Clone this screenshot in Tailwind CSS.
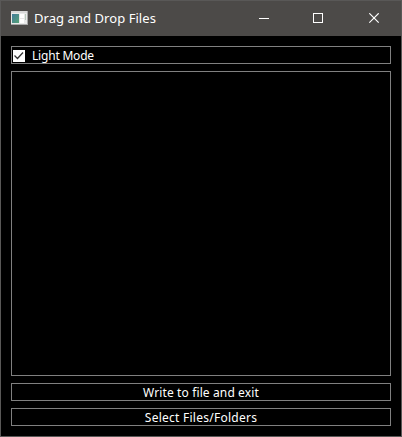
<!DOCTYPE html>
<html lang="en">
<head>
<meta charset="utf-8">
<title>Drag and Drop Files</title>
<script src="https://cdn.jsdelivr.net/npm/@tailwindcss/browser@4"></script>
</head>
<body class="bg-black">
<main class="flex h-[437px] w-[402px] flex-col border border-[#595857] bg-black text-white">
  <header class="flex h-[35px] shrink-0 items-center bg-[#4c4a48]">
    <svg class="ml-[10px] h-[14px] w-[17px] shrink-0 -translate-y-px" viewBox="0 0 17 14" shape-rendering="crispEdges">
      <defs><linearGradient id="screen" x1="0" y1="0" x2="1" y2="1"><stop offset="0" stop-color="#427b9b"/><stop offset="1" stop-color="#56a277"/></linearGradient></defs>
      <path fill="#e9e9e9" d="M0 0h16v14H0z"/>
      <path fill="#a8a8a8" d="M0 13h16v1H0zM16 0h1v14h-1z"/>
      <path fill="#d8d8d8" d="M0 0h16v2H0z"/>
      <path fill="url(#screen)" d="M1 3h7v9H1z"/>
      <path fill="#fff" d="M9 3h4v4H9zM9 8h4v4H9z"/>
      <path fill="#b9cbbd" d="M14 3h1v6h-1z"/>
    </svg>
    <h1 class="ml-[6px] -translate-y-px whitespace-nowrap font-['Noto_Sans','Open_Sans',sans-serif] text-[13px] leading-4 tracking-[0.06px]">Drag and Drop Files</h1>
    <div class="ml-auto flex h-full shrink-0">
      <button class="flex w-[55px] items-center justify-center" aria-label="Minimize"><svg class="h-[11px] w-[11px] translate-x-px" viewBox="0 0 11 11" shape-rendering="crispEdges"><path fill="#fff" d="M0 5h10v1H0z"/></svg></button>
      <button class="flex w-[55px] items-center justify-center" aria-label="Maximize"><svg class="h-[11px] w-[11px]" viewBox="0 0 11 11" shape-rendering="crispEdges"><path fill="none" stroke="#fff" d="M.5 1.5h9v9h-9z" transform="translate(0 -1)"/></svg></button>
      <button class="flex w-[55px] items-center justify-center" aria-label="Close"><svg class="h-[11px] w-[11px] translate-x-px" viewBox="0 0 11 11"><path fill="none" stroke="#fff" stroke-width="1.2" d="M.3 .3l9.4 9.4M9.7 .3L.3 9.7"/></svg></button>
    </div>
  </header>
  <section class="flex min-h-0 flex-1 flex-col gap-[7px] p-[10px] font-['Noto_Sans','DejaVu_Sans',sans-serif] text-[12px] leading-4">
    <label class="flex h-[18px] shrink-0 items-center border border-[#808080]">
      <svg class="h-[13px] w-[13px] shrink-0" viewBox="0 0 13 13"><path fill="#fff" d="M1 1h12v12H1z"/><path fill="none" stroke="#333" stroke-width="1.3" d="M2.5 6.5l3 3 5.5-6"/></svg>
      <span class="ml-[7px] translate-y-px whitespace-nowrap tracking-[-0.2px]">Light Mode</span>
    </label>
    <div class="min-h-0 flex-1 border border-[#808080]"></div>
    <button class="flex h-[18px] shrink-0 items-center justify-center border border-[#808080] whitespace-nowrap"><span class="translate-y-px tracking-[0.12px]">Write to file and exit</span></button>
    <button class="flex h-[18px] shrink-0 items-center justify-center border border-[#808080] whitespace-nowrap"><span class="translate-y-px tracking-[0.25px]">Select Files/Folders</span></button>
  </section>
</main>
</body>
</html>
